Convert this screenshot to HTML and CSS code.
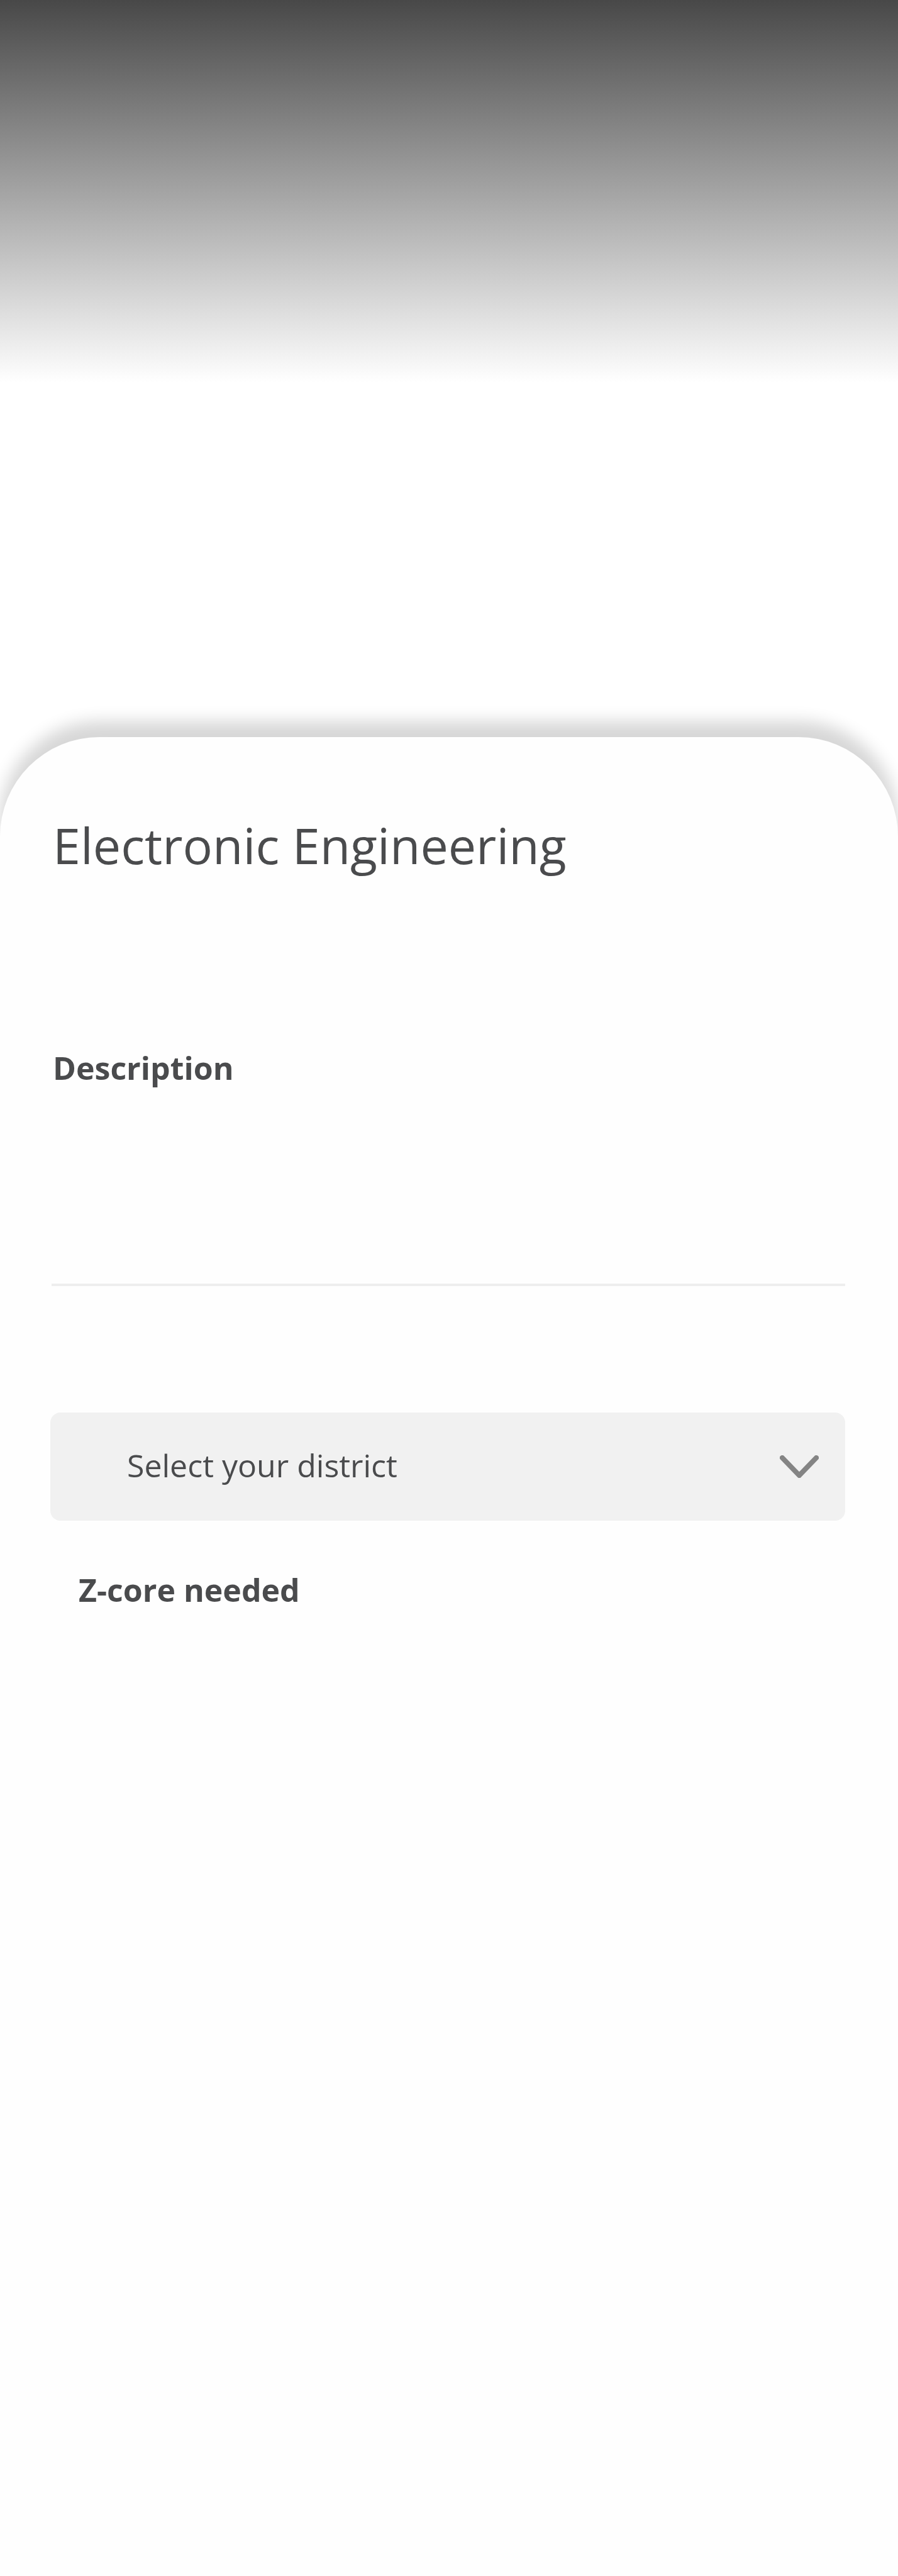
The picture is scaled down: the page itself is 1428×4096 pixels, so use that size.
FILE: index.html
```html
<!DOCTYPE html>
<html lang="en">
<head>
<meta charset="utf-8">
<meta name="viewport" content="width=device-width, initial-scale=1">
<title>Electronic Engineering</title>
<link rel="stylesheet" href="styles.css">
</head>
<body class="page">
<header class="hero"></header>
<main class="card">
  <h1 class="card-title">Electronic Engineering</h1>
  <section class="description">
    <h2 class="section-title">Description</h2>
  </section>
  <section class="scores">
    <div class="picker">
      <select class="picker-select" aria-label="Select your district">
        <option>Select your district</option>
      </select>
      <svg class="picker-icon" viewBox="0 0 62 36" fill="none" stroke="#848484" stroke-width="8" stroke-linecap="round" stroke-linejoin="round" aria-hidden="true"><path d="M4 4 31 32 58 4"/></svg>
    </div>
    <h2 class="section-title scores-title">Z-core needed</h2>
  </section>
</main>
</body>
</html>
```

FILE: styles.css
```css
* {
  box-sizing: border-box;
}

.page {
  margin: 0;
  min-height: 100vh;
  display: flex;
  flex-direction: column;
  background: #fff;
  color: #4a4b4d;
  font-family: "Open Sans", "Noto Sans", sans-serif;
  overflow-x: hidden;
}

.hero {
  height: 1172px;
  background: linear-gradient(#484848, #fff 608px);
}

.card {
  flex: 1;
  padding: 118px 84px 80px 80px;
  border-radius: 158px 158px 0 0;
  background: #fefefe;
  box-shadow: 0 -25px 26px rgba(0, 0, 0, 0.16);
}

.card-title {
  margin: 0;
  padding-left: 4px;
  font-size: 79px;
  font-weight: 400;
  line-height: 108px;
}

.description {
  height: 385px;
  margin: 262px 0 0 2px;
  padding-left: 2px;
  border-bottom: 4px solid #eee;
}

.section-title {
  margin: 0;
  font-size: 50px;
  font-weight: 700;
  line-height: 76px;
}

.scores {
  margin-top: 201px;
}

.picker {
  display: grid;
  align-items: center;
}

.picker-select,
.picker-icon {
  grid-area: 1 / 1;
}

.picker-select {
  width: 100%;
  height: 172px;
  padding: 0 122px 4px;
  border: 0;
  border-radius: 16px;
  appearance: none;
  background: #f1f1f1;
  color: inherit;
  font: 400 50px/76px "Open Sans", "Noto Sans", sans-serif;
}

.picker-icon {
  justify-self: end;
  width: 62px;
  height: 36px;
  margin-right: 42px;
  pointer-events: none;
}

.scores-title {
  margin: 72px 0 0 45px;
}
```
